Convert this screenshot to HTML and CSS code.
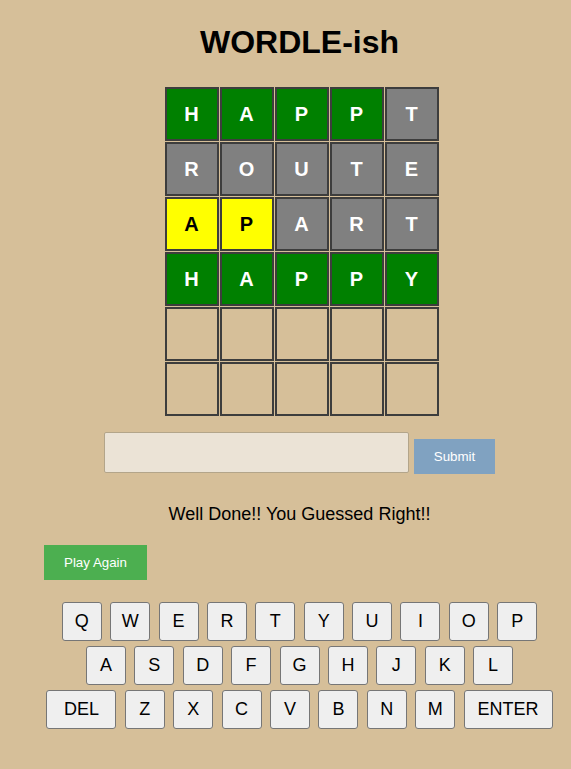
FILE: index.html
```html
<!DOCTYPE html>
<html>
<head>
<meta charset="utf-8">
<link rel="stylesheet" href="styles.css">
</head>
<body>
<div class="app">
  <h1 class="title">WORDLE-ish</h1>
  <div class="board">
    <div class="tile green">H</div><div class="tile green">A</div><div class="tile green">P</div><div class="tile green">P</div><div class="tile gray">T</div>
    <div class="tile gray">R</div><div class="tile gray">O</div><div class="tile gray">U</div><div class="tile gray">T</div><div class="tile gray">E</div>
    <div class="tile yellow">A</div><div class="tile yellow">P</div><div class="tile gray">A</div><div class="tile gray">R</div><div class="tile gray">T</div>
    <div class="tile green">H</div><div class="tile green">A</div><div class="tile green">P</div><div class="tile green">P</div><div class="tile green">Y</div>
    <div class="tile"></div><div class="tile"></div><div class="tile"></div><div class="tile"></div><div class="tile"></div>
    <div class="tile"></div><div class="tile"></div><div class="tile"></div><div class="tile"></div><div class="tile"></div>
  </div>
  <div class="entry">
    <input class="guess" type="text">
    <button class="submit">Submit</button>
  </div>
  <p class="message">Well Done!! You Guessed Right!!</p>
  <div class="again-row"><button class="again">Play Again</button></div>
  <div class="keyboard">
    <div class="krow">
      <button class="key">Q</button><button class="key">W</button><button class="key">E</button><button class="key">R</button><button class="key">T</button><button class="key">Y</button><button class="key">U</button><button class="key">I</button><button class="key">O</button><button class="key">P</button>
    </div>
    <div class="krow">
      <button class="key">A</button><button class="key">S</button><button class="key">D</button><button class="key">F</button><button class="key">G</button><button class="key">H</button><button class="key">J</button><button class="key">K</button><button class="key">L</button>
    </div>
    <div class="krow">
      <button class="key wide-del">DEL</button><button class="key">Z</button><button class="key">X</button><button class="key">C</button><button class="key">V</button><button class="key">B</button><button class="key">N</button><button class="key">M</button><button class="key wide-enter">ENTER</button>
    </div>
  </div>
</div>
</body>
</html>
```
FILE: styles.css
```css
html, body {
  margin: 0;
  padding: 0;
  background: #d6bf99;
  font-family: "Liberation Sans", Arial, sans-serif;
  color: #000;
}
.app {
  margin-left: 44px;
  width: 511px;
  display: flex;
  flex-direction: column;
  align-items: center;
}
.title {
  margin: 0;
  padding-top: 24px;
  font-size: 32px;
  line-height: 37px;
  font-weight: bold;
}
.board {
  margin-top: 26px;
  margin-left: 4px;
  display: grid;
  grid-template-columns: repeat(5, 54px);
  grid-auto-rows: 54px;
  gap: 1px;
}
.tile {
  box-sizing: border-box;
  border: 2px solid #3d3d3d;
  display: flex;
  align-items: center;
  justify-content: center;
  font-size: 20px;
  font-weight: bold;
  color: #fff;
}
.green { background: #008000; }
.gray { background: #808080; }
.yellow { background: #ffff00; color: #000; }
.entry {
  margin-top: 16px;
  display: flex;
  align-items: flex-start;
  gap: 5px;
}
.guess {
  box-sizing: border-box;
  width: 305px;
  height: 41px;
  margin: 0;
  background: #ebe3d6;
  border: 1px solid #b3a58a;
  border-radius: 2px;
}
.submit {
  margin-top: 7px;
  width: 81px;
  height: 35px;
  border: none;
  background: #80a2c1;
  color: #fff;
  font-family: "Liberation Sans", Arial, sans-serif;
  font-size: 13.33px;
}
.message {
  margin: 30px 0 0;
  font-size: 18px;
  line-height: 20px;
}
.again-row {
  align-self: stretch;
  margin-top: 21px;
}
.again {
  width: 103px;
  height: 35px;
  border: none;
  background: #4caf50;
  color: #fff;
  font-family: "Liberation Sans", Arial, sans-serif;
  font-size: 13.33px;
}
.keyboard {
  margin-top: 22px;
  display: flex;
  flex-direction: column;
  align-items: center;
  gap: 5px;
}
.krow {
  display: flex;
  gap: 8.4px;
}
.key {
  box-sizing: border-box;
  width: 40px;
  height: 39px;
  padding: 0;
  background: #efefef;
  border: 1px solid #767676;
  border-radius: 3px;
  font-family: "Liberation Sans", Arial, sans-serif;
  font-size: 18px;
  color: #000;
}
.wide-del { width: 70px; }
.wide-enter { width: 89px; }
```
